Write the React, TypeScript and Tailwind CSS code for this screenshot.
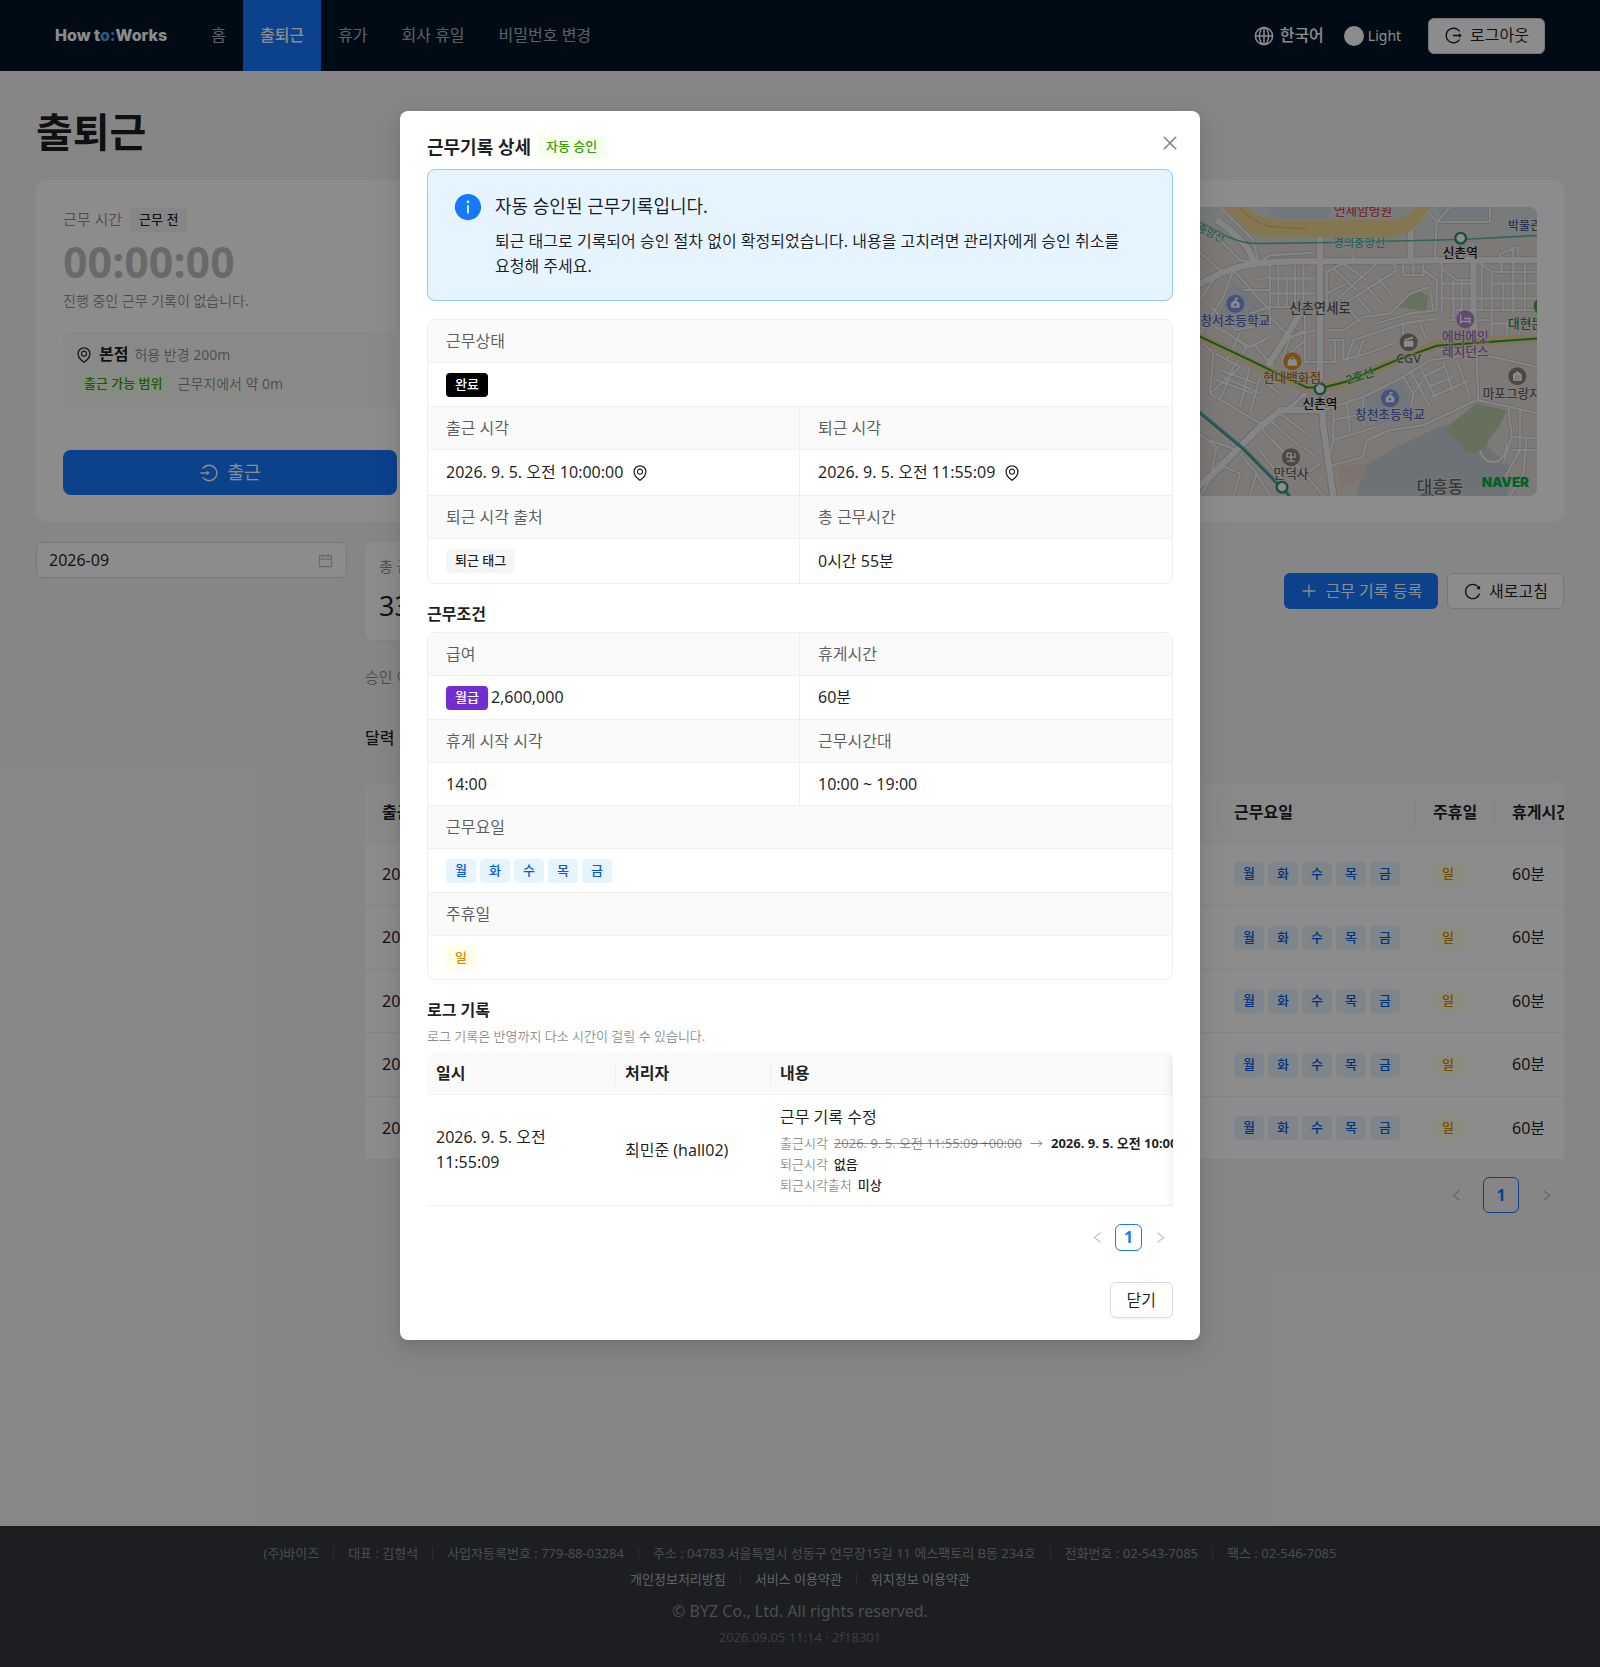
import React from "react";
import {
  AiFillInfoCircle,
  AiOutlineCalendar,
  AiOutlineClose,
  AiOutlineEnvironment,
  AiOutlineLeft,
  AiOutlineLogin,
  AiOutlineLogout,
  AiOutlinePlus,
  AiOutlineReload,
  AiOutlineRight,
} from "react-icons/ai";

const days = ["월", "화", "수", "목", "금"];

const tagTones = {
  plain: "bg-black/4 text-black/88",
  green: "bg-[#f6ffed] text-[#389e0d]",
  blue: "bg-[#e6f4ff] text-[#0958d9]",
  gold: "bg-[#feffe6] text-[#d48806]",
  black: "bg-black text-white",
  purple: "bg-[#722ed1] text-white",
};

function Tag({ tone, children }: { tone: keyof typeof tagTones; children: React.ReactNode }) {
  return (
    <span
      className={`inline-block h-6 rounded px-[9px] text-[13px] leading-[22px] font-medium whitespace-nowrap ${tagTones[tone]}`}
    >
      {children}
    </span>
  );
}

function DayTags() {
  return (
    <div className="flex gap-1">
      {days.map((d) => (
        <Tag key={d} tone="blue">
          {d}
        </Tag>
      ))}
    </div>
  );
}

function GlobeIcon() {
  return (
    <svg width="20" height="20" viewBox="0 0 20 20" fill="none" stroke="currentColor" strokeWidth="1.5" aria-hidden="true">
      <circle cx="10" cy="10" r="8.6" />
      <ellipse cx="10" cy="10" rx="4.6" ry="8.6" />
      <path d="M10 1.4 V18.6 M1.4 10 H18.6" />
    </svg>
  );
}

const navItems = ["홈", "출퇴근", "휴가", "회사 휴일", "비밀번호 변경"];

function Header() {
  return (
    <header className="flex h-[71px] items-center bg-[#001529] px-[55px]">
      <a href="#" className="font-[Inter] text-[16px] font-extrabold text-white">
        How t<span className="text-[#5b9cf0]">o:</span>Works
      </a>
      <nav className="ml-[27px] flex h-full">
        {navItems.map((item) => (
          <a
            key={item}
            href="#"
            className={
              item === "출퇴근"
                ? "flex h-full items-center bg-[#1677ff] px-[17px] font-medium text-white"
                : "flex h-full items-center px-[17px] text-white/65"
            }
          >
            {item}
          </a>
        ))}
      </nav>
      <div className="ml-auto flex items-center">
        <button type="button" className="flex items-center gap-[6px] font-medium text-white">
          <GlobeIcon />
          한국어
        </button>
        <button type="button" className="ml-5 flex items-center gap-1 text-[14px] text-white">
          <span className="size-5 rounded-full bg-white" />
          Light
        </button>
        <button
          type="button"
          className="ml-[27px] flex h-9 items-center gap-[7px] rounded-md border border-[#d9d9d9] bg-white px-[15px] text-black/88"
        >
          <AiOutlineLogout size={19} />
          로그아웃
        </button>
      </div>
    </header>
  );
}

const minorRoads = [
  "M90 81 L190 180 L205 250",
  "M0 190 L90 270 L30 360",
  "M30 120 L150 240 L240 255",
  "M240 225 L370 218 M240 225 L205 250",
  "M130 270 L240 390 L240 450 M130 270 L100 350 L30 460",
  "M240 255 V380 M265 255 V378 M290 290 V378 M315 255 V378 M340 255 V378",
  "M240 295 H375 M240 340 H375 M240 380 H375 M180 400 L240 380",
  "M200 300 L240 290 M160 330 L240 330",
  "M60 380 L140 450 L230 430 M60 430 L180 500 L240 470",
  "M100 450 L170 500 L130 560 M150 460 L110 540 M190 490 L250 560",
  "M240 410 L300 470 L375 450 M260 500 L340 450 M275 540 L345 480",
  "M345 400 V545 M345 545 H440 M300 470 L275 545",
  "M410 275 L490 235 V220 M410 275 V390 L450 350 L560 250 L600 240",
  "M410 340 L470 310 M430 265 L500 330 M460 250 L530 300 M440 385 L620 270",
  "M560 290 L610 350 M530 320 L575 370 M500 350 L545 400 M470 380 L515 430",
  "M620 270 L610 245 M640 250 V285 L700 285 V250 M670 250 V285",
  "M700 270 L740 300 L740 390 M755 240 V400 M720 330 L730 390",
  "M600 400 L660 340 L720 320 M560 430 L660 400 L740 390",
  "M415 450 H460 L520 410 L600 400 M415 480 H460 V540 M435 480 V545",
  "M470 540 L490 480 L640 430 L740 415 M500 535 L520 480 M460 540 L530 520 L610 490",
  "M640 430 L640 500 M690 430 L710 480",
  "M755 265 L800 300 H845 M790 300 V420 M815 300 V420 M755 310 H845 M755 355 H900 M790 390 H900",
  "M860 240 L905 275 V480 M905 275 H1041 M905 310 H1041 M905 355 H1041 M905 390 H1041",
  "M935 240 V275 L930 220 L985 200 V240 M940 310 V390 M970 200 V400 M1005 240 V390 M875 240 V390",
  "M780 420 H900 M860 430 V480 M905 430 H1041 M950 430 V480",
  "M700 81 L740 125 L780 81 M740 125 H900 V81 M735 240 L740 125",
  "M812 180 V240 M850 190 L830 240",
  "M40 490 L70 520 L60 640 L160 700 L230 740",
  "M75 520 L150 560 L60 640 M100 590 L210 640 M130 560 L90 660 M180 560 L150 680 M210 590 L180 700",
  "M80 600 L190 640 M90 570 L200 610 M230 610 L270 640 M350 640 L190 760",
  "M300 690 L340 640 L380 690 M270 700 L350 760 M240 720 L330 800 M215 745 L300 840",
  "M400 690 L520 650 L640 590 L720 540 L860 520 L1041 560",
  "M430 680 V780 L560 740 M470 665 L480 760 M520 650 V740 M430 720 L520 700 M430 780 L410 860",
  "M640 590 L670 640 L660 700 M670 640 L700 600 M660 570 L720 680 M690 560 L740 660",
  "M700 590 L760 560 M715 620 L790 590 M725 650 L840 600 M760 545 L790 640 M800 540 L840 650",
  "M410 860 L520 830 L530 780 L600 750 L700 735 L860 660 L960 680 L1041 700",
  "M860 520 L865 660 M955 680 L965 770 L940 850 M965 770 L1041 775 M990 690 V810 L940 900",
  "M965 810 H1041 M1010 775 L1000 880 L960 947",
  "M870 810 Q880 850 920 845 Q950 830 950 790",
  "M60 780 L140 810 L200 760 M0 740 L80 800 L60 900 L30 947 M80 850 L150 880 L130 947",
  "M150 820 L200 880 L180 947 M200 800 L280 900 M250 780 L360 900 L400 947",
  "M200 880 L240 947 M300 840 L350 880 L390 850 M340 800 L380 830",
];

const majorRoads = [
  "M0 330 Q60 290 130 265 Q200 240 420 243 H600 L740 240 H1041",
  "M390 150 V600",
  "M395 650 L400 740 L430 947",
  "M662 150 V240",
  "M850 240 V490",
  "M400 690 L270 690 L200 750 L70 880 L0 940",
  "M330 400 Q260 520 230 560",
  "M80 120 Q180 190 190 245",
];

function MapPin({ x, y, color, children }: { x: number; y: number; color: string; children?: React.ReactNode }) {
  return (
    <g transform={`translate(${x} ${y})`}>
      <circle r="27" fill={color} />
      {children}
    </g>
  );
}

const schoolGlyph = (
  <g fill="#fff">
    <path d="M-13 -2 L0 -12 L13 -2 V12 H-13 Z" />
    <path d="M-1 -18 H8 V-13 H2 V-8 H-1 Z" />
    <circle cy="3" r="4" fill="#7f95dd" />
  </g>
);

function AreaMap() {
  return (
    <div className="flex h-[289px] min-w-0 flex-1 justify-end overflow-hidden rounded-lg bg-[#e2dcd9]">
      <svg
        width="347"
        height="289"
        viewBox="0 81 1041 866"
        className="shrink-0"
        role="img"
        aria-label="근무지 지도"
        fontFamily="'Noto Sans','Noto Sans CJK KR',sans-serif"
      >
        <rect y="81" width="1041" height="866" fill="#e2dcd9" />
        <path d="M0 81 H1041 V160 L640 180 L200 190 L0 120 Z" fill="#dddee0" />
        <path d="M230 81 H420 V115 H260 Z M740 81 H900 V130 H770 Z" fill="#cfd8e4" />
        <path d="M520 650 L640 600 L670 690 L560 740 Z" fill="#d0d8e2" />
        <path d="M130 300 L235 390 L200 420 L90 400 Z" fill="#d0d8e2" />
        <path d="M520 860 L620 800 L760 735 L860 770 L960 860 L950 947 H500 Z" fill="#c6d0d9" />
        <path d="M765 745 L860 670 L950 690 Q930 740 895 780 Q880 830 830 815 Z" fill="#bacdaa" />
        <path d="M610 380 L680 330 L715 345 L710 392 Z" fill="#bcd0aa" />
        <path d="M440 860 L520 850 L530 890 L450 930 Z" fill="#e6d3c8" />
        <g fill="none" stroke="#c2bfbe" strokeLinejoin="round">
          {minorRoads.map((d) => (
            <path key={d} d={d} strokeWidth="11" />
          ))}
          {majorRoads.map((d) => (
            <path key={d} d={d} strokeWidth="24" />
          ))}
        </g>
        <g fill="none" stroke="#f3f3f4" strokeLinejoin="round">
          {minorRoads.map((d) => (
            <path key={d} d={d} strokeWidth="7" />
          ))}
          {majorRoads.map((d) => (
            <path key={d} d={d} strokeWidth="19" />
          ))}
        </g>
        <path
          d="M100 81 L150 130 Q185 172 230 172 L610 172 Q680 160 718 81 L680 81 Q650 120 600 120 L260 118 Q200 110 170 81 Z"
          fill="#efd892"
        />
        <path d="M150 81 Q200 140 260 140 L350 146" fill="none" stroke="#dcbf6d" strokeWidth="4" />
        <g fill="none">
          <path
            d="M0 455 L180 545 L350 624 H400 L470 606 L620 540 L740 492 L1041 475"
            stroke="#ecd79b"
            strokeWidth="26"
            strokeLinejoin="round"
          />
          <path
            d="M0 455 L180 540 L350 622 H400 L470 604 L620 540 L740 497 L1041 475"
            stroke="#2a9a41"
            strokeWidth="6"
          />
          <path d="M0 110 L110 168 Q160 190 200 190 L430 187 L812 178 L1041 166" stroke="#5db9a0" strokeWidth="5" />
          <path d="M0 672 L160 805 L300 947" stroke="#63a9c0" strokeWidth="10" />
          <path d="M0 676 L160 809 L296 947" stroke="#2f9c78" strokeWidth="4" />
          <g fill="#fff" stroke="#2f8f68" strokeWidth="7">
            <circle cx="812" cy="174" r="16" />
            <circle cx="390" cy="626" r="16" />
            <circle cx="276" cy="921" r="16" />
          </g>
        </g>
        <MapPin x={136} y={371} color="#7f95dd">{schoolGlyph}</MapPin>
        <MapPin x={600} y={654} color="#7f95dd">{schoolGlyph}</MapPin>
        <MapPin x={307} y={543} color="#d79524">
          <path d="M-12 -5 H12 L15 14 H-15 Z" fill="#fff" />
          <path d="M-6 -3 V-9 Q0 -16 6 -9 V-3" fill="none" stroke="#fff" strokeWidth="3" />
        </MapPin>
        <MapPin x={656} y={486} color="#8b8480">
          <path d="M-14 -4 H14 V14 H-14 Z M-14 -8 L12 -16 L14 -11 L-10 -5 Z" fill="#fff" />
        </MapPin>
        <MapPin x={826} y={417} color="#b583cc">
          <path d="M-14 -14 V14 M-14 7 H14 V-2 H-4 M14 7 V14" fill="none" stroke="#fff" strokeWidth="4" />
        </MapPin>
        <MapPin x={982} y={588} color="#8b8480">
          <path d="M-13 14 V-6 L0 -15 L13 -6 V14 Z" fill="#fff" />
          <path d="M-6 0 H6 M-6 7 H6" stroke="#8b8480" strokeWidth="3" strokeDasharray="4 4" />
        </MapPin>
        <MapPin x={303} y={831} color="#8b8480">
          <path d="M-12 -12 H0 V12 H12 M-12 -12 V0 H12 V-12 M-12 12 H0" fill="none" stroke="#fff" strokeWidth="4" />
        </MapPin>
        <circle cx="1058" cy="378" r="27" fill="#4ba04f" />
        <circle cx="712" cy="962" r="26" fill="#7f95dd" />
        <g
          fontSize="38"
          fontWeight="500"
          textAnchor="middle"
          stroke="#f2efed"
          strokeWidth="5"
          strokeOpacity="0.6"
          paintOrder="stroke"
        >
          <text x="519" y="105" fill="#cf4b60">연세암병원</text>
          <text x="508" y="200" fill="#4fae95" fontSize="34">경의중앙선</text>
          <text x="60" y="170" fill="#4fae95" fontSize="32" transform="rotate(27 60 165)">중앙선</text>
          <text x="811" y="232" fill="#111">신촌역</text>
          <text x="954" y="149" fill="#4b5a94" textAnchor="start" fontSize="36">박물관</text>
          <text x="390" y="399" fill="#555" fontSize="40">신촌연세로</text>
          <text x="136" y="436" fill="#5168b8">창서초등학교</text>
          <text x="826" y="482" fill="#9a68b5">에버에잇</text>
          <text x="826" y="527" fill="#9a68b5">레지던스</text>
          <text x="954" y="443" fill="#35803c" textAnchor="start">대현문</text>
          <text x="656" y="550" fill="#6b6460">CGV</text>
          <text x="306" y="606" fill="#a96f10">현대백화점</text>
          <text x="510" y="600" fill="#2a9a41" fontSize="36" transform="rotate(-18 510 588)">2호선</text>
          <text x="390" y="683" fill="#111">신촌역</text>
          <text x="600" y="717" fill="#5168b8">창천초등학교</text>
          <text x="878" y="653" fill="#6b6460" textAnchor="start">마포그랑자이</text>
          <text x="303" y="894" fill="#6b6460">만덕사</text>
          <text x="750" y="938" fill="#666" fontSize="51">대흥동</text>
        </g>
        <text x="875" y="921" fontSize="40" fontWeight="900" fontFamily="Inter" fill="#00b34a">
          NAVER
        </text>
      </svg>
    </div>
  );
}

function ClockCard() {
  return (
    <section className="mt-6 flex h-[342px] gap-[27px] rounded-xl bg-white p-[27px]">
      <div className="flex w-[334px] shrink-0 flex-col">
        <div className="flex items-center gap-2">
          <span className="text-[15px] leading-[25px] text-black/45">근무 시간</span>
          <Tag tone="plain">근무 전</Tag>
        </div>
        <p className="mt-1 text-[43px] leading-[52px] font-bold text-black/25">00:00:00</p>
        <p className="mt-[2px] text-[14px] leading-[22px] text-black/45">진행 중인 근무 기록이 없습니다.</p>
        <div className="mt-5 flex h-[76px] flex-col justify-center gap-1 rounded-lg bg-black/2 pb-[2px] pl-3">
          <div className="flex items-center">
            <AiOutlineEnvironment size={18} />
            <b className="ml-[6px] leading-[25px] font-bold">본점</b>
            <span className="ml-[6px] text-[14px] text-black/45">허용 반경 200m</span>
          </div>
          <div className="flex items-center gap-[6px] text-[14px] text-black/45">
            <Tag tone="green">출근 가능 범위</Tag>
            근무지에서 약 0m
          </div>
        </div>
        <button
          type="button"
          className="mt-auto flex h-[45px] items-center justify-center gap-2 rounded-lg bg-[#1677ff] text-[18px] text-white"
        >
          <AiOutlineLogin size={20} />
          출근
        </button>
      </div>
      <AreaMap />
    </section>
  );
}

const recordRows = ["2026. 9. 5.", "2026. 9. 4.", "2026. 9. 3.", "2026. 9. 2.", "2026. 9. 1."];

function RecordTable() {
  return (
    <div className="mt-8 overflow-hidden rounded-t-lg">
      <table className="w-[1320px] table-fixed border-separate border-spacing-0 text-left">
        <colgroup>
          <col className="w-[852px]" />
          <col className="w-[199px]" />
          <col className="w-[79px]" />
          <col className="w-[190px]" />
        </colgroup>
        <thead>
          <tr className="h-[60px] bg-[#fafafa]">
            {["출근 시각", "근무요일", "주휴일", "휴게시간"].map((h) => (
              <th key={h} className="border-b border-[#f0f0f0] p-0 font-bold whitespace-nowrap">
                <div className="border-r border-[#f0f0f0] py-[2px] pl-[17px]">{h}</div>
              </th>
            ))}
          </tr>
        </thead>
        <tbody>
          {recordRows.map((r) => (
            <tr key={r} className="h-[63px] bg-white even:h-16">
              <td className="border-b border-[#f0f0f0] py-0 pl-[17px]">{r}</td>
              <td className="border-b border-[#f0f0f0] py-0 pl-[17px]">
                <DayTags />
              </td>
              <td className="border-b border-[#f0f0f0] py-0 pl-[17px]">
                <div className="flex">
                  <Tag tone="gold">일</Tag>
                </div>
              </td>
              <td className="border-b border-[#f0f0f0] py-0 pl-[17px]">60분</td>
            </tr>
          ))}
        </tbody>
      </table>
    </div>
  );
}

function Records() {
  return (
    <section className="mt-5 flex gap-[18px]">
      <label className="flex h-9 w-[311px] shrink-0 items-center self-start rounded-md border border-[#d9d9d9] bg-white px-3">
        <input aria-label="월 선택" defaultValue="2026-09" className="min-w-0 flex-1 bg-transparent outline-none" />
        <AiOutlineCalendar size={17} className="text-black/25" />
      </label>
      <div className="min-w-0 flex-1">
        <div className="flex items-center justify-between">
          <div className="h-[98px] w-[200px] rounded-lg bg-white px-[14px] py-3 shadow-xs">
            <p className="text-[15px] leading-[25px] text-black/45">총 근무시간</p>
            <p className="mt-1 text-[27px] leading-[46px]">33시간</p>
          </div>
          <div className="flex gap-[9px]">
            <button
              type="button"
              className="flex h-9 items-center gap-[7px] rounded-md bg-[#1677ff] px-4 text-white"
            >
              <AiOutlinePlus size={18} />
              근무 기록 등록
            </button>
            <button
              type="button"
              className="flex h-9 items-center gap-[7px] rounded-md border border-[#d9d9d9] bg-white px-[15px]"
            >
              <AiOutlineReload size={19} />
              새로고침
            </button>
          </div>
        </div>
        <p className="mt-[25px] text-[15px] leading-[25px] text-black/45">승인 여부</p>
        <p className="mt-9 leading-[25px] font-medium">달력</p>
        <RecordTable />
        <nav aria-label="근무 기록 페이지" className="mt-[17px] flex justify-end gap-[9px]">
          <button type="button" aria-label="이전" className="grid size-9 place-items-center text-black/25">
            <AiOutlineLeft size={15} />
          </button>
          <button
            type="button"
            className="size-9 rounded-md border border-[#1677ff] font-bold text-[#1677ff]"
          >
            1
          </button>
          <button type="button" aria-label="다음" className="grid size-9 place-items-center text-black/25">
            <AiOutlineRight size={15} />
          </button>
        </nav>
      </div>
    </section>
  );
}

const company = [
  "(주)바이즈",
  "대표 : 김형석",
  "사업자등록번호 : 779-88-03284",
  "주소 : 04783 서울특별시 성동구 연무장15길 11 에스팩토리 B동 234호",
  "전화번호 : 02-543-7085",
  "팩스 : 02-546-7085",
];

function Footer() {
  return (
    <footer className="mt-auto flex h-[141px] flex-col items-center bg-[#33373c] pt-[14px] text-center">
      <ul className="flex items-center text-[13px] leading-[26px] text-[#868e96]">
        {company.map((c, i) => (
          <li key={c} className="flex items-center">
            {i > 0 && <span className="mx-[14px] h-3 w-px bg-white/15" />}
            {c}
          </li>
        ))}
      </ul>
      <div className="flex items-center text-[13px] leading-[26px] text-[#adb5bd]">
        {["개인정보처리방침", "서비스 이용약관", "위치정보 이용약관"].map((c, i) => (
          <React.Fragment key={c}>
            {i > 0 && <span className="mx-[14px] h-3 w-px bg-white/15" />}
            <a href="#">{c}</a>
          </React.Fragment>
        ))}
      </div>
      <p className="mt-[6px] leading-[26px] text-[#868e96]">© BYZ Co., Ltd. All rights reserved.</p>
      <p className="text-[13px] leading-[26px] text-[#868e96]/70">2026.09.05 11:14 · 2f18301</p>
    </footer>
  );
}

type Cell = { label: string; value: React.ReactNode };
type DescRow = { cells: Cell[]; height: string };

function Descriptions({ rows }: { rows: DescRow[] }) {
  return (
    <div className="overflow-hidden rounded-lg border border-[#f0f0f0]">
      <table className="w-full table-fixed border-separate border-spacing-0 text-left">
        <tbody>
          {rows.map((row, r) => {
            const span = row.cells.length === 1 ? 2 : 1;
            const last = r === rows.length - 1;
            return (
              <React.Fragment key={row.cells[0].label}>
                <tr className="h-[43px]">
                  {row.cells.map((c, i) => (
                    <th
                      key={c.label}
                      colSpan={span}
                      className={`border-b border-[#f0f0f0] bg-[#fafafa] px-[18px] py-0 font-normal text-black/65 ${i === 0 && span === 1 ? "border-r" : ""}`}
                    >
                      {c.label}
                    </th>
                  ))}
                </tr>
                <tr className={row.height}>
                  {row.cells.map((c, i) => (
                    <td
                      key={c.label}
                      colSpan={span}
                      className={`border-[#f0f0f0] px-[18px] py-0 ${last ? "" : "border-b"} ${i === 0 && span === 1 ? "border-r" : ""}`}
                    >
                      <div className="flex items-center">{c.value}</div>
                    </td>
                  ))}
                </tr>
              </React.Fragment>
            );
          })}
        </tbody>
      </table>
    </div>
  );
}

function TimeWithPlace({ time }: { time: string }) {
  return (
    <>
      {time}
      <button type="button" aria-label="위치 보기" className="ml-2">
        <AiOutlineEnvironment size={18} />
      </button>
    </>
  );
}

const statusRows: DescRow[] = [
  { height: "h-[44px]", cells: [{ label: "근무상태", value: <Tag tone="black">완료</Tag> }] },
  {
    height: "h-[46px]",
    cells: [
      { label: "출근 시각", value: <TimeWithPlace time="2026. 9. 5. 오전 10:00:00" /> },
      { label: "퇴근 시각", value: <TimeWithPlace time="2026. 9. 5. 오전 11:55:09" /> },
    ],
  },
  {
    height: "h-[44px]",
    cells: [
      { label: "퇴근 시각 출처", value: <Tag tone="plain">퇴근 태그</Tag> },
      { label: "총 근무시간", value: "0시간 55분" },
    ],
  },
];

const conditionRows: DescRow[] = [
  {
    height: "h-[44px]",
    cells: [
      {
        label: "급여",
        value: (
          <>
            <Tag tone="purple">월급</Tag>
            <span className="ml-[3px]">2,600,000</span>
          </>
        ),
      },
      { label: "휴게시간", value: "60분" },
    ],
  },
  {
    height: "h-[43px]",
    cells: [
      { label: "휴게 시작 시각", value: "14:00" },
      { label: "근무시간대", value: "10:00 ~ 19:00" },
    ],
  },
  { height: "h-[44px]", cells: [{ label: "근무요일", value: <DayTags /> }] },
  { height: "h-[43px]", cells: [{ label: "주휴일", value: <Tag tone="gold">일</Tag> }] },
];

function LogTable() {
  return (
    <div className="relative mt-[6px] overflow-hidden rounded-t-lg">
      <table className="w-[860px] table-fixed border-separate border-spacing-0 text-left">
        <colgroup>
          <col className="w-[189px]" />
          <col className="w-[155px]" />
          <col className="w-[516px]" />
        </colgroup>
        <thead>
          <tr className="h-[43px] bg-[#fafafa]">
            {["일시", "처리자", "내용"].map((h) => (
              <th key={h} className="border-b border-[#f0f0f0] p-0 font-bold">
                <div className="border-r border-[#f0f0f0] pl-[9px]">{h}</div>
              </th>
            ))}
          </tr>
        </thead>
        <tbody>
          <tr className="h-[111px]">
            <td className="border-b border-[#f0f0f0] px-[9px] py-0">2026. 9. 5. 오전 11:55:09</td>
            <td className="border-b border-[#f0f0f0] px-[9px] py-0">최민준 (hall02)</td>
            <td className="border-b border-[#f0f0f0] px-[9px] py-0 whitespace-nowrap">
              <p>근무 기록 수정</p>
              <dl className="mt-[3px] text-[13px] leading-[21px]">
                <div className="flex gap-[6px]">
                  <dt className="text-black/45">출근시각</dt>
                  <dd>
                    <del className="text-black/45">2026. 9. 5. 오전 11:55:09 +00:00</del>
                    <span className="mx-2 text-black/45">→</span>
                    <b>2026. 9. 5. 오전 10:00:00</b>
                  </dd>
                </div>
                <div className="flex gap-[6px]">
                  <dt className="text-black/45">퇴근시각</dt>
                  <dd className="font-medium">없음</dd>
                </div>
                <div className="flex gap-[6px]">
                  <dt className="text-black/45">퇴근시각출처</dt>
                  <dd className="font-medium">미상</dd>
                </div>
              </dl>
            </td>
          </tr>
        </tbody>
      </table>
      <div className="pointer-events-none absolute inset-y-0 right-0 w-2 bg-linear-to-l from-black/5 to-transparent" />
    </div>
  );
}

function DetailModal() {
  return (
    <div
      role="dialog"
      aria-modal="true"
      aria-labelledby="detail-title"
      className="relative w-[800px] rounded-lg bg-white px-[27px] py-[22px] shadow-[0_6px_16px_0_rgba(0,0,0,0.08),0_3px_6px_-4px_rgba(0,0,0,0.12),0_9px_28px_8px_rgba(0,0,0,0.05)]"
    >
      <button
        type="button"
        aria-label="닫기"
        className="absolute top-[22px] right-[22px] grid size-[18px] place-items-center text-black/45"
      >
        <AiOutlineClose size={20} className="shrink-0" />
      </button>
      <h2 id="detail-title" className="flex items-center gap-[6px] text-[18px] leading-7 font-bold">
        근무기록 상세
        <span className="flex">
          <Tag tone="green">자동 승인</Tag>
        </span>
      </h2>
      <div className="mt-2 flex gap-3 rounded-lg border border-[#91caff] bg-[#e6f4ff] px-[25px] pt-[22px] pb-[21px]">
        <AiFillInfoCircle size={30} className="shrink-0 text-[#1677ff]" />
        <div>
          <p className="text-[18px] leading-7">자동 승인된 근무기록입니다.</p>
          <p className="mt-[9px] break-keep">
            퇴근 태그로 기록되어 승인 절차 없이 확정되었습니다. 내용을 고치려면 관리자에게 승인 취소를 요청해 주세요.
          </p>
        </div>
      </div>
      <div className="mt-[18px]">
        <Descriptions rows={statusRows} />
      </div>
      <h3 className="mt-[18px] mb-[5px] font-bold">근무조건</h3>
      <Descriptions rows={conditionRows} />
      <h3 className="mt-[18px] font-bold">로그 기록</h3>
      <p className="mt-[3px] text-[13px] leading-5 text-black/45">
        로그 기록은 반영까지 다소 시간이 걸릴 수 있습니다.
      </p>
      <LogTable />
      <nav aria-label="로그 페이지" className="mt-[18px] flex items-center justify-end gap-[5px]">
        <button type="button" aria-label="이전" className="grid size-[26px] place-items-center text-black/25">
          <AiOutlineLeft size={15} />
        </button>
        <button
          type="button"
          className="grid size-[27px] place-items-center rounded-md border border-[#1677ff] font-bold text-[#1677ff]"
        >
          1
        </button>
        <button type="button" aria-label="다음" className="grid size-[26px] place-items-center text-black/25">
          <AiOutlineRight size={15} />
        </button>
      </nav>
      <div className="mt-[31px] flex justify-end">
        <button
          type="button"
          className="h-9 rounded-md border border-[#d9d9d9] bg-white px-4 shadow-[0_2px_0_rgba(0,0,0,0.02)]"
        >
          닫기
        </button>
      </div>
    </div>
  );
}

export default function App() {
  return (
    <div className="relative flex min-h-screen flex-col bg-[#f5f5f5] font-['Noto_Sans','Noto_Sans_CJK_KR',sans-serif] text-[16px] leading-[25px] text-black/88">
      <Header />
      <main className="px-9 pt-[37px] pb-8">
        <h1 className="text-[40px] leading-[48px] font-bold">출퇴근</h1>
        <ClockCard />
        <Records />
      </main>
      <Footer />
      <div className="absolute inset-0 flex items-start justify-center bg-black/45 pt-[111px]">
        <DetailModal />
      </div>
    </div>
  );
}
